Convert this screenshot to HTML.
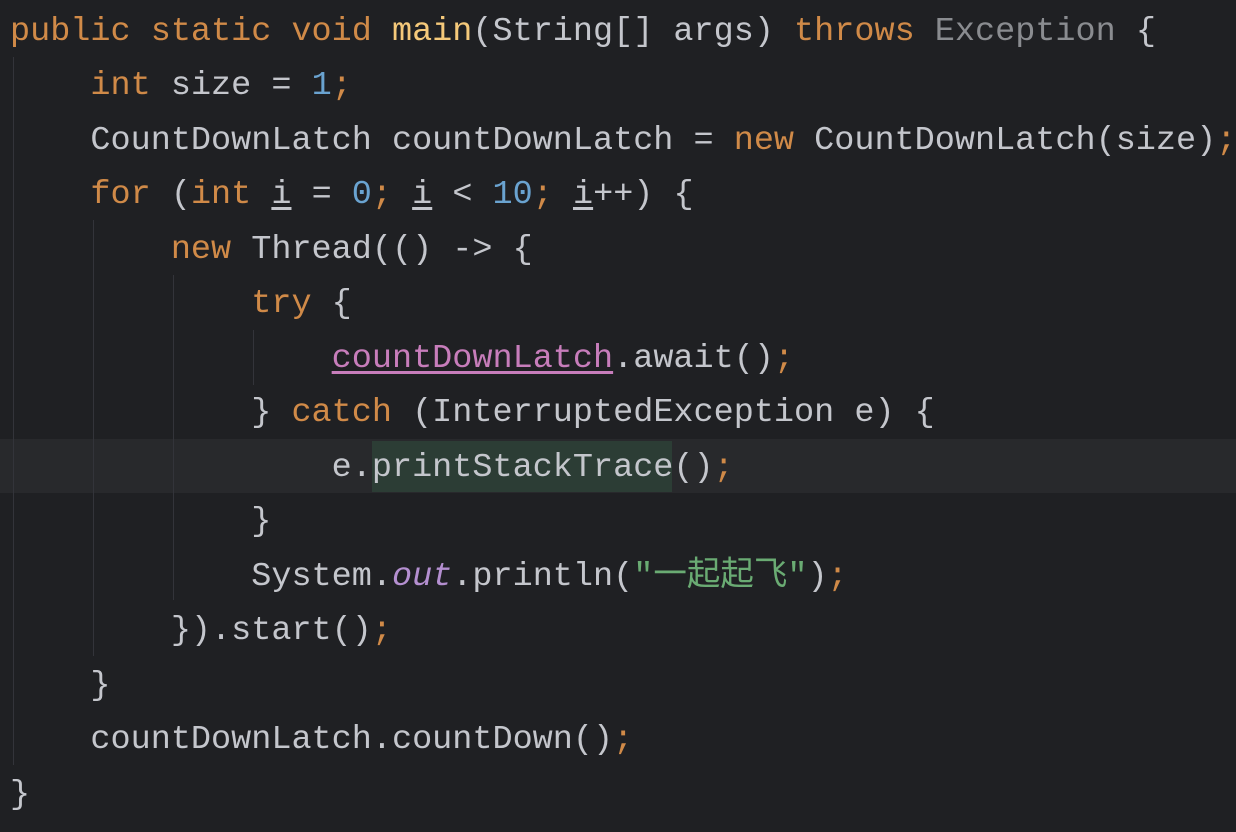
<!DOCTYPE html>
<html><head><meta charset="utf-8"><style>
html,body{margin:0;padding:0;width:1236px;height:832px;overflow:hidden;background:#1f2023;}
.ln{position:absolute;left:10px;height:54.5px;line-height:54.5px;white-space:pre;font-family:"Liberation Mono","Noto Sans CJK SC",monospace;font-size:33.5px;color:#c4c6cc;margin-top:2px;}
.k{color:#d08a48}.n{color:#6aa3d0}.f{color:#f5c97a}.g{color:#8a8c90}.s{color:#6aab73}.p{color:#c77dbb}.o{color:#b48fd0;font-style:italic}.u{text-decoration:underline;text-underline-offset:4px}
.cur{position:absolute;left:0;top:439px;width:1236px;height:54px;background:#28292c}
.hl{position:absolute;left:372px;top:441px;width:300px;height:51px;background:#2c3d35}
.gd{position:absolute;width:1px;background:#33343a}
</style></head><body>
<div class="cur"></div><div class="hl"></div>
<div class="gd" style="left:13px;top:57px;height:708px"></div>
<div class="gd" style="left:93px;top:220px;height:436px"></div>
<div class="gd" style="left:173px;top:275px;height:325px"></div>
<div class="gd" style="left:253px;top:330px;height:55px"></div>
<div class="ln" style="top:2.5px"><span class="k">public static void </span><span class="f">main</span>(String[] args) <span class="k">throws </span><span class="g">Exception</span> {</div>
<div class="ln" style="top:57px">    <span class="k">int </span>size = <span class="n">1</span><span class="k">;</span></div>
<div class="ln" style="top:111.5px">    CountDownLatch countDownLatch = <span class="k">new </span>CountDownLatch(size)<span class="k">;</span></div>
<div class="ln" style="top:166px">    <span class="k">for </span>(<span class="k">int </span><span class="u">i</span> = <span class="n">0</span><span class="k">; </span><span class="u">i</span> &lt; <span class="n">10</span><span class="k">; </span><span class="u">i</span>++) {</div>
<div class="ln" style="top:220.5px">        <span class="k">new </span>Thread(() -&gt; {</div>
<div class="ln" style="top:275px">            <span class="k">try </span>{</div>
<div class="ln" style="top:329.5px">                <span class="p u">countDownLatch</span>.await()<span class="k">;</span></div>
<div class="ln" style="top:384px">            } <span class="k">catch </span>(InterruptedException e) {</div>
<div class="ln" style="top:438.5px">                e.printStackTrace()<span class="k">;</span></div>
<div class="ln" style="top:493px">            }</div>
<div class="ln" style="top:547.5px">            System.<span class="o">out</span>.println(<span class="s">"一起起飞"</span>)<span class="k">;</span></div>
<div class="ln" style="top:602px">        }).start()<span class="k">;</span></div>
<div class="ln" style="top:656.5px">    }</div>
<div class="ln" style="top:711px">    countDownLatch.countDown()<span class="k">;</span></div>
<div class="ln" style="top:765.5px">}</div>
</body></html>
